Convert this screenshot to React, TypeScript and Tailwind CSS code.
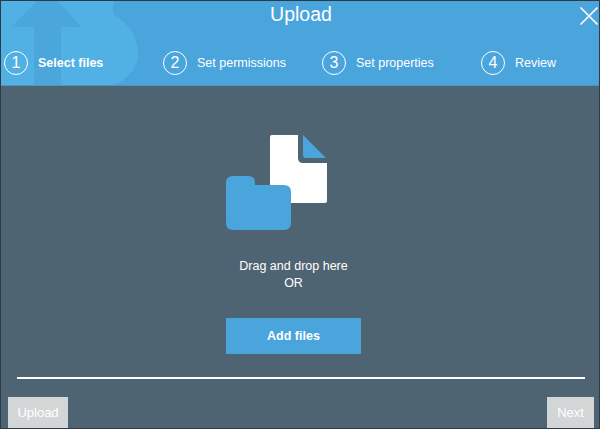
import { X } from "lucide-react"

const steps = [
    { n: 1, label: "Select files", active: true },
    { n: 2, label: "Set permissions", active: false },
    { n: 3, label: "Set properties", active: false },
    { n: 4, label: "Review", active: false },
]

// faint arrow and "B" shape behind the header
const HeaderMark = () => (
    <svg className="absolute left-0 top-0" width="140" height="84" viewBox="0 0 140 84">
        <path d="M0 0H114C111 5 111 10 114 15C130 24 137 38 137 52C137 66 129 77 113 84H0Z" fill="#52b1e4" />
        <path d="M10 26L36 0H57L80 26H60V84H33V26Z" fill="#4ba6dc" />
    </svg>
)

const FilesIcon = () => (
    <svg className="mr-[34px]" width="102" height="96" viewBox="0 0 102 96">
        <path d="M46 0H72V23Q72 28 77 28H101V66Q101 68 99 68H46Q44 68 44 66V2Q44 0 46 0Z" fill="#ffffff" />
        <path d="M77 0L100 23H80Q77 23 77 20Z" fill="#4aa5dc" />
        <path d="M7 41H22Q29 41 29 47V50H58Q65 50 65 57V88Q65 95 58 95H7Q0 95 0 88V48Q0 41 7 41Z" fill="#4aa5dc" />
    </svg>
)

const App = () => {
    return (
        <div className="w-[600px] h-[429px] flex flex-col bg-[#4f6473] text-white overflow-hidden border border-[#2f3b44] font-['Liberation_Sans',sans-serif]">
            {/* Header */}
            <header className="relative h-[85px] shrink-0 bg-[#4aa5dc] border-b border-[#5b8fb3]">
                <HeaderMark />
                <div className="relative flex items-center justify-center h-[27px] text-[19.5px] pl-[2px]">Upload</div>
                <button className="absolute right-[-6px] top-[-1px] text-white">
                    <X size={32} strokeWidth={1.3} />
                </button>
                <div className="relative grid grid-cols-4 w-[639px] mt-[23px] pl-[3px]">
                    {steps.map((step) => (
                        <div key={step.n} className="flex items-center gap-[10px]">
                            <span className="flex items-center justify-center w-[24px] h-[24px] rounded-full border-[1.5px] border-white text-[16px]">{step.n}</span>
                            <span className={`text-[12.5px] ${step.active ? "font-bold" : ""}`}>{step.label}</span>
                        </div>
                    ))}
                </div>
            </header>

            {/* Drop area */}
            <main className="flex-1 flex flex-col items-center pt-[49px] pr-[13px]">
                <FilesIcon />
                <div className="mt-[27px] text-[12.5px] leading-[17px] text-center">
                    <div>Drag and drop here</div>
                    <div>OR</div>
                </div>
                <button className="mt-[26px] w-[135px] h-[36px] bg-[#4aa5dc] text-[12.5px] font-bold">Add files</button>
            </main>

            {/* Footer */}
            <footer className="shrink-0 pl-[7px] pr-[5px]">
                <div className="h-[2px] bg-white mx-[9px] mb-[18px]" />
                <div className="flex justify-between">
                    <button className="w-[60px] h-[31px] bg-[#d3d6d6] text-[13px]">Upload</button>
                    <button className="w-[47px] h-[31px] bg-[#d3d6d6] text-[13px]">Next</button>
                </div>
            </footer>
        </div>
    )
}

export default App
